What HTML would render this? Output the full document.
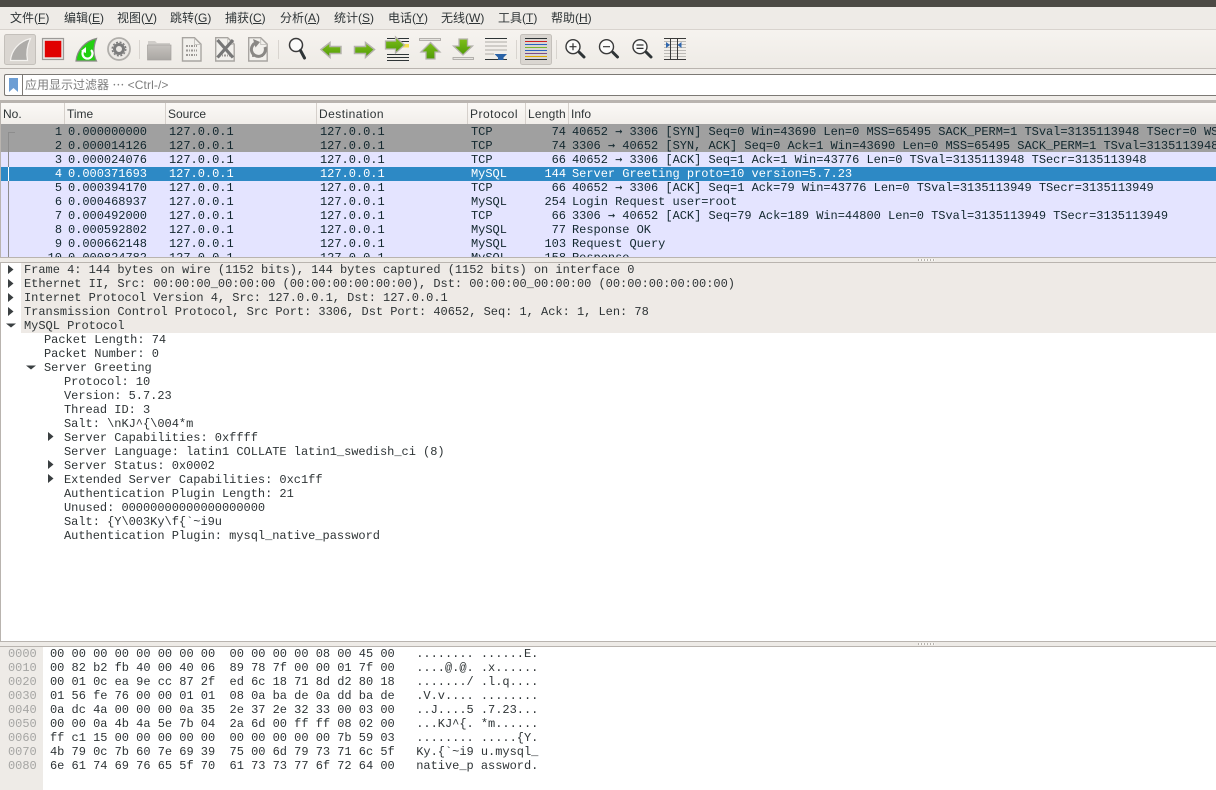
<!DOCTYPE html>
<html><head><meta charset="utf-8"><style>
html,body{margin:0;padding:0;width:1216px;height:790px;overflow:hidden;background:#fff}
body{position:relative;font-family:"Liberation Sans","Noto Sans CJK SC",sans-serif;font-size:12px;color:#2e3436}
.a{position:absolute}
.m{position:absolute;top:10px;line-height:16px;font-size:12px;white-space:nowrap;color:#2e3436}
.h{position:absolute;top:103px;height:21px;line-height:23px;white-space:nowrap;border-right:1px solid #d5d0cb;box-sizing:border-box;padding-left:2px;color:#2e3436;background:linear-gradient(#fbf9f6,#f1eeea)}
pre{margin:0;font-family:"Liberation Mono",monospace;font-size:12px;line-height:14px;letter-spacing:-.02px}
.r{position:absolute;left:0;width:1216px;height:14px;overflow:hidden;white-space:pre;font-family:"Liberation Mono",monospace;font-size:12px;line-height:14px;letter-spacing:-.02px;color:#12272e;background:#e4e4ff}
.r span{position:absolute;top:0}
.r.x span{top:1px}
.r b{font-family:"DejaVu Sans Mono",monospace;font-weight:normal;line-height:0}
.no{right:1154px}.t{left:68px}.s{left:169px}.d{left:320px}.p{left:471px}.l{right:650px}.i{left:572px}
.g{background:#a0a0a0}
.sel{background:#2d89c5;color:#fff}
.dt{position:absolute;white-space:pre;font-family:"Liberation Mono",monospace;font-size:12px;line-height:14px;letter-spacing:-.02px;height:14px;color:#2e3436}
.b{position:absolute;left:21px;width:1195px;height:14px;background:#eeeae6}
svg{position:absolute;overflow:visible}
</style></head><body>
<div class="a" style="left:0;top:0;width:1216px;height:7px;background:#4c4a45"></div>
<div class="a" style="left:0;top:7px;width:1216px;height:22px;background:#eeebe7"></div>
<div class="a" style="left:0;top:29px;width:1216px;height:1px;background:#d8d3ce"></div>
<div class="a" style="left:0;top:30px;width:1216px;height:38px;background:linear-gradient(#f6f3ef,#eeebe6)"></div>
<div class="a" style="left:0;top:68px;width:1216px;height:1px;background:#b9b4af"></div>
<div class="a" style="left:0;top:69px;width:1216px;height:33px;background:#f0ede9"></div>
<div class="m" style="left:10px">文件(<u>F</u>)</div>
<div class="m" style="left:64px">编辑(<u>E</u>)</div>
<div class="m" style="left:117px">视图(<u>V</u>)</div>
<div class="m" style="left:170px">跳转(<u>G</u>)</div>
<div class="m" style="left:225px">捕获(<u>C</u>)</div>
<div class="m" style="left:280px">分析(<u>A</u>)</div>
<div class="m" style="left:334px">统计(<u>S</u>)</div>
<div class="m" style="left:388px">电话(<u>Y</u>)</div>
<div class="m" style="left:441px">无线(<u>W</u>)</div>
<div class="m" style="left:498px">工具(<u>T</u>)</div>
<div class="m" style="left:551px">帮助(<u>H</u>)</div>

<svg style="left:0;top:0" width="1216" height="70" viewBox="0 0 1216 70">
<defs>
<linearGradient id="gr" x1="0" y1="0" x2="0" y2="1"><stop offset="0" stop-color="#7fbf1a"/><stop offset="1" stop-color="#4e9a06"/></linearGradient>
<linearGradient id="fo" x1="0" y1="0" x2="0" y2="1"><stop offset="0" stop-color="#c6c3bf"/><stop offset="1" stop-color="#a9a6a2"/></linearGradient>
</defs>
<!-- shark toggle -->
<rect x="4.500" y="34.500" width="31" height="30" rx="2" fill="#dad6d1" stroke="#c4c0bb"/>
<path d="M10.500 60.500C11.500 50 19 41.500 30.500 38.500C27 46 26 53 27.500 60.500Z" fill="#aeaca9" stroke="#f4f2ef" stroke-width="1.200"/>
<!-- stop -->
<rect x="42.500" y="38.500" width="21" height="21" fill="#e8e6e3" stroke="#9c9a97" stroke-width="1.200"/>
<rect x="44.800" y="40.800" width="16.500" height="16.500" fill="#e00000"/>
<!-- restart shark -->
<path d="M76 61C77 50 85 41 96.500 38.500C93.500 46 93 54 96.500 61Z" fill="#22d010" stroke="#8a8a86" stroke-width="1.200"/>
<path d="M91 50a5 5 0 1 1-7 0" fill="none" stroke="#fff" stroke-width="2.200"/>
<path d="M81 51l5-4v6z" fill="#fff"/>
<!-- options gear -->
<circle cx="119" cy="49" r="11" fill="#ece9e5" stroke="#b0aeaa" stroke-width="1.800"/>
<circle cx="119" cy="49" r="4.500" fill="none" stroke="#7c7c7c" stroke-width="3"/>
<circle cx="119" cy="49" r="6.800" fill="none" stroke="#7c7c7c" stroke-width="1.400" stroke-dasharray="2 1.600"/>
<rect x="139" y="40" width="1" height="19" fill="#d8d4cf"/>
<!-- folder -->
<path d="M148 60V41h7l2 2h13v17z" fill="#d0cdc9"/>
<rect x="147.500" y="45" width="23.500" height="15" fill="url(#fo)" stroke="#a5a29e" stroke-width=".7"/>
<!-- docs -->
<g fill="#f2f0ec" stroke="#a8a5a1" stroke-width="1.400">
<path d="M182.500 37.700h12l6.500 6.500v16.800h-18.500z"/><path d="M215.700 37.700h12l6.500 6.500v16.800h-18.500z"/><path d="M248.700 37.700h12l6.500 6.500v16.800h-18.500z"/>
</g>
<path d="M194.500 38v6.500h6.500M227.700 38v6.500h6.500M260.700 38v6.500h6.500" fill="none" stroke="#bcb9b5" stroke-width=".8"/>
<g stroke="#9c9996" stroke-width="2" stroke-dasharray="2 1 1 1">
<path d="M186 46h11M186 50.500h11M186 55h11M219 55.500h11M252 56h11"/>
</g>
<path d="M217.500 40l15.500 17.500M233 40l-15.500 17.500" stroke="#777" stroke-width="3.200"/>
<path d="M265 47a7 7 0 1 1-8-4.500" fill="none" stroke="#8a8885" stroke-width="3"/>
<path d="M253 39l7 3-4.500 5.500z" fill="#8a8885"/>
<rect x="278" y="40" width="1" height="19" fill="#d8d4cf"/>
<!-- find -->
<circle cx="296" cy="45" r="6.500" fill="#fbfbfa" stroke="#3a3a3a" stroke-width="1.500"/>
<path d="M300.500 50.500l4 7.500" stroke="#2e3436" stroke-width="3" stroke-linecap="round"/>
<!-- back/fwd -->
<path d="M321 49.500l9-7v4h11v7h-11v4z" fill="url(#gr)" stroke="#b5b2ad" stroke-width="1.500"/>
<path d="M374.500 49.500l-9-7v4h-11v7h11v4z" fill="url(#gr)" stroke="#b5b2ad" stroke-width="1.500"/>
<!-- goto -->
<g stroke="#2e3436" stroke-width="1"><path d="M387 38.500h22M387 41.500h22M387 54.500h22M387 57.500h22M387 60.500h22"/></g>
<rect x="403" y="44" width="6" height="3.500" fill="#f4e04d"/>
<path d="M404.500 45l-9-8v4h-10v8h10v4z" fill="url(#gr)" stroke="#b5b2ad" stroke-width="1.300"/>
<!-- top -->
<rect x="419.500" y="38.500" width="21" height="2" fill="#e6e4e0" stroke="#a5a29e" stroke-width=".8"/>
<path d="M430.500 42.500l9.500 9.500h-5v7h-9v-7h-5z" fill="url(#gr)" stroke="#b5b2ad" stroke-width="1.300"/>
<!-- bottom -->
<path d="M459 39h8.500v7h5l-9.500 9-9.500-9h5.500z" fill="url(#gr)" stroke="#b5b2ad" stroke-width="1.300"/>
<rect x="453" y="57.500" width="20.500" height="2" fill="#e6e4e0" stroke="#a5a29e" stroke-width=".8"/>
<!-- autoscroll -->
<g stroke="#c5c2bd" stroke-width="1.500"><path d="M485 42h22M485 46h22M485 50h22M485 54h9"/></g>
<path d="M485 38.500h22M485 59.500h22" stroke="#2e3436" stroke-width="1"/>
<path d="M494.500 54h12.500l-3.500 3.500v2.500h-5.500v-2.500z" fill="#2a62a6"/>
<rect x="516" y="40" width="1" height="19" fill="#d8d4cf"/>
<!-- colorize -->
<rect x="520.500" y="34.500" width="31" height="30" rx="2" fill="#dad6d1" stroke="#c4c0bb"/>
<path d="M525 38.500h22" stroke="#2e3436"/><path d="M525 41.500h22" stroke="#d02020"/><path d="M525 44.500h22" stroke="#2a62c0"/><path d="M525 47.500h22" stroke="#7ab72c"/><path d="M525 50.500h22" stroke="#2a62c0"/><path d="M525 53.500h22" stroke="#7a4b8a"/><path d="M525 56.500h22" stroke="#e0a800"/><path d="M525 59.500h22" stroke="#2e3436"/>
<rect x="556" y="40" width="1" height="19" fill="#d8d4cf"/>
<!-- zoom -->
<g fill="#fbfbfa" stroke="#3a3a3a" stroke-width="1.400">
<circle cx="573" cy="46.700" r="7"/><circle cx="606.500" cy="46.700" r="7"/><circle cx="640" cy="46.700" r="7"/>
</g>
<g stroke="#2e3436" stroke-width="3" stroke-linecap="round"><path d="M579.500 52.500l4.500 4.500M613 52.500l4.500 4.500M646.500 52.500l4.500 4.500"/></g>
<g stroke="#333" stroke-width="1.200"><path d="M569.500 46.700h7M573 43.200v7M603 46.700h7M636.500 45h7M636.500 48.400h7"/></g>
<!-- resize columns -->
<g stroke="#bcbab6"><path d="M664 41.500h22M664 44.500h22M664 47.500h22M664 50.500h22M664 53.500h22M664 56.500h22"/></g>
<path d="M664 38.500h22M664 59.500h22M670.500 38v22M677.500 38v22" stroke="#3a3a3a"/>
<path d="M666 42l4 3-4 3zM681.500 42l-4 3 4 3z" fill="#2f66ad"/>
</svg>

<!-- filter -->
<div class="a" style="left:4px;top:74px;width:1212px;height:22px;border:1px solid #7c7975;border-right:none;border-radius:2px 0 0 2px;background:#fff;box-sizing:border-box"></div>
<div class="a" style="left:22px;top:75px;width:1px;height:20px;background:#7c7975"></div>
<svg style="left:9px;top:78px" width="9" height="15"><path d="M0 0h9v14l-4.500-4-4.500 4z" fill="#6d9ed4"/></svg>
<div class="a" style="left:25px;top:77px;line-height:16px;color:#7d7d7d;white-space:nowrap">应用显示过滤器 ⋯ <span style="letter-spacing:.1px">&lt;Ctrl-/&gt;</span></div>

<!-- packet list -->
<div class="a" style="left:0;top:100px;width:1216px;height:3px;background:#b9b4af"></div>
<div class="a" style="left:0;top:103px;width:1px;height:155px;background:#b9b4af;z-index:3"></div>
<div class="h" style="left:1px;width:64px">No.</div>
<div class="h" style="left:65px;width:101px">Time</div>
<div class="h" style="left:166px;width:151px">Source</div>
<div class="h" style="left:317px;width:151px;letter-spacing:.45px">Destination</div>
<div class="h" style="left:468px;width:58px;letter-spacing:.5px">Protocol</div>
<div class="h" style="left:526px;width:43px;letter-spacing:.2px">Length</div>
<div class="h" style="left:569px;width:647px;border:none">Info</div>

<div class="a" style="left:0;top:124px;width:1216px;height:134px;overflow:hidden">
<div class="r g x" style="top:0"><span class="no">1</span><span class="t">0.000000000</span><span class="s">127.0.0.1</span><span class="d">127.0.0.1</span><span class="p">TCP</span><span class="l">74</span><span class="i">40652 <b>→</b> 3306 [SYN] Seq=0 Win=43690 Len=0 MSS=65495 SACK_PERM=1 TSval=3135113948 TSecr=0 WS=128</span></div>
<div class="r g x" style="top:14px"><span class="no">2</span><span class="t">0.000014126</span><span class="s">127.0.0.1</span><span class="d">127.0.0.1</span><span class="p">TCP</span><span class="l">74</span><span class="i">3306 <b>→</b> 40652 [SYN, ACK] Seq=0 Ack=1 Win=43690 Len=0 MSS=65495 SACK_PERM=1 TSval=3135113948 TSecr=3135113948</span></div>
<div class="r x" style="top:28px;height:15px"><span class="no">3</span><span class="t">0.000024076</span><span class="s">127.0.0.1</span><span class="d">127.0.0.1</span><span class="p">TCP</span><span class="l">66</span><span class="i">40652 <b>→</b> 3306 [ACK] Seq=1 Ack=1 Win=43776 Len=0 TSval=3135113948 TSecr=3135113948</span></div>
<div class="r sel" style="top:43px;height:14px"><span class="no">4</span><span class="t">0.000371693</span><span class="s">127.0.0.1</span><span class="d">127.0.0.1</span><span class="p">MySQL</span><span class="l">144</span><span class="i">Server Greeting proto=10 version=5.7.23</span></div>
<div class="r" style="top:57px"><span class="no">5</span><span class="t">0.000394170</span><span class="s">127.0.0.1</span><span class="d">127.0.0.1</span><span class="p">TCP</span><span class="l">66</span><span class="i">40652 <b>→</b> 3306 [ACK] Seq=1 Ack=79 Win=43776 Len=0 TSval=3135113949 TSecr=3135113949</span></div>
<div class="r" style="top:71px"><span class="no">6</span><span class="t">0.000468937</span><span class="s">127.0.0.1</span><span class="d">127.0.0.1</span><span class="p">MySQL</span><span class="l">254</span><span class="i">Login Request user=root</span></div>
<div class="r" style="top:85px"><span class="no">7</span><span class="t">0.000492000</span><span class="s">127.0.0.1</span><span class="d">127.0.0.1</span><span class="p">TCP</span><span class="l">66</span><span class="i">3306 <b>→</b> 40652 [ACK] Seq=79 Ack=189 Win=44800 Len=0 TSval=3135113949 TSecr=3135113949</span></div>
<div class="r" style="top:99px"><span class="no">8</span><span class="t">0.000592802</span><span class="s">127.0.0.1</span><span class="d">127.0.0.1</span><span class="p">MySQL</span><span class="l">77</span><span class="i">Response OK</span></div>
<div class="r" style="top:113px"><span class="no">9</span><span class="t">0.000662148</span><span class="s">127.0.0.1</span><span class="d">127.0.0.1</span><span class="p">MySQL</span><span class="l">103</span><span class="i">Request Query</span></div>
<div class="r" style="top:127px"><span class="no">10</span><span class="t">0.000824782</span><span class="s">127.0.0.1</span><span class="d">127.0.0.1</span><span class="p">MySQL</span><span class="l">158</span><span class="i">Response</span></div>
<div class="a" style="left:8px;top:8px;width:1px;height:126px;background:#8d8d8d"></div>
<div class="a" style="left:8px;top:8px;width:7px;height:1px;background:#8d8d8d"></div>
<div class="a" style="left:8px;top:43px;width:1px;height:14px;background:#fff"></div>
</div>

<!-- splitter 1 -->
<div class="a" style="left:0;top:257px;width:1216px;height:1px;background:#b9b4af"></div>
<div class="a" style="left:0;top:258px;width:1216px;height:4px;background:#eeebe7"></div>
<div class="a" style="left:0;top:262px;width:1216px;height:1px;background:#b9b4af"></div>
<div class="a" style="left:918px;top:259px;width:17px;height:2px;background:repeating-linear-gradient(90deg,#b5b2ad 0,#b5b2ad 1px,#f8f6f3 1px,#f8f6f3 3px)"></div>

<!-- details -->
<div class="a" style="left:0;top:263px;width:1216px;height:378px;background:#fff;border-left:1px solid #b9b4af;box-sizing:border-box"></div>
<div class="b" style="top:263px;height:70px"></div>
<svg style="left:0;top:263px" width="20" height="70"><g fill="#3a3f41"><path d="M8 2l5.500 4.500-5.500 4.500zM8 16l5.500 4.500-5.500 4.500zM8 30l5.500 4.500-5.500 4.500zM8 44l5.500 4.500-5.500 4.500zM6 60.500h10l-5 4z"/></g></svg>
<div class="dt" style="left:24px;top:263px">Frame 4: 144 bytes on wire (1152 bits), 144 bytes captured (1152 bits) on interface 0</div>
<div class="dt" style="left:24px;top:277px">Ethernet II, Src: 00:00:00_00:00:00 (00:00:00:00:00:00), Dst: 00:00:00_00:00:00 (00:00:00:00:00:00)</div>
<div class="dt" style="left:24px;top:291px">Internet Protocol Version 4, Src: 127.0.0.1, Dst: 127.0.0.1</div>
<div class="dt" style="left:24px;top:305px">Transmission Control Protocol, Src Port: 3306, Dst Port: 40652, Seq: 1, Ack: 1, Len: 78</div>
<div class="dt" style="left:24px;top:319px">MySQL Protocol</div>
<div class="dt" style="left:44px;top:333px">Packet Length: 74</div>
<div class="dt" style="left:44px;top:347px">Packet Number: 0</div>
<div class="dt" style="left:44px;top:361px">Server Greeting</div>
<div class="dt" style="left:64px;top:375px">Protocol: 10</div>
<div class="dt" style="left:64px;top:389px">Version: 5.7.23</div>
<div class="dt" style="left:64px;top:403px">Thread ID: 3</div>
<div class="dt" style="left:64px;top:417px">Salt: \nKJ^{\004*m</div>
<div class="dt" style="left:64px;top:431px">Server Capabilities: 0xffff</div>
<div class="dt" style="left:64px;top:445px">Server Language: latin1 COLLATE latin1_swedish_ci (8)</div>
<div class="dt" style="left:64px;top:459px">Server Status: 0x0002</div>
<div class="dt" style="left:64px;top:473px">Extended Server Capabilities: 0xc1ff</div>
<div class="dt" style="left:64px;top:487px">Authentication Plugin Length: 21</div>
<div class="dt" style="left:64px;top:501px">Unused: 00000000000000000000</div>
<div class="dt" style="left:64px;top:515px">Salt: {Y\003Ky\f{`~i9u</div>
<div class="dt" style="left:64px;top:529px">Authentication Plugin: mysql_native_password</div>
<svg style="left:0;top:360px" width="60" height="130"><g fill="#3a3f41"><path d="M26 5.500h10l-5 4zM48 72l5.500 4.500-5.500 4.500zM48 100l5.500 4.500-5.500 4.500zM48 114l5.500 4.500-5.500 4.500z"/></g></svg>

<!-- splitter 2 -->
<div class="a" style="left:0;top:641px;width:1216px;height:1px;background:#b9b4af"></div>
<div class="a" style="left:0;top:642px;width:1216px;height:4px;background:#eeebe7"></div>
<div class="a" style="left:0;top:646px;width:1216px;height:1px;background:#b9b4af"></div>
<div class="a" style="left:918px;top:643px;width:17px;height:2px;background:repeating-linear-gradient(90deg,#b5b2ad 0,#b5b2ad 1px,#f8f6f3 1px,#f8f6f3 3px)"></div>

<!-- hex -->
<div class="a" style="left:0;top:647px;width:43px;height:143px;background:#eeebe7"></div>
<pre class="a" style="left:8px;top:647px;color:#a5a5a3">0000
0010
0020
0030
0040
0050
0060
0070
0080</pre>
<pre class="a" style="left:50px;top:647px;color:#2e3436">00 00 00 00 00 00 00 00  00 00 00 00 08 00 45 00   ........ ......E.
00 82 b2 fb 40 00 40 06  89 78 7f 00 00 01 7f 00   ....@.@. .x......
00 01 0c ea 9e cc 87 2f  ed 6c 18 71 8d d2 80 18   ......./ .l.q....
01 56 fe 76 00 00 01 01  08 0a ba de 0a dd ba de   .V.v.... ........
0a dc 4a 00 00 00 0a 35  2e 37 2e 32 33 00 03 00   ..J....5 .7.23...
00 00 0a 4b 4a 5e 7b 04  2a 6d 00 ff ff 08 02 00   ...KJ^{. *m......
ff c1 15 00 00 00 00 00  00 00 00 00 00 7b 59 03   ........ .....{Y.
4b 79 0c 7b 60 7e 69 39  75 00 6d 79 73 71 6c 5f   Ky.{`~i9 u.mysql_
6e 61 74 69 76 65 5f 70  61 73 73 77 6f 72 64 00   native_p assword.</pre>
</body></html>
